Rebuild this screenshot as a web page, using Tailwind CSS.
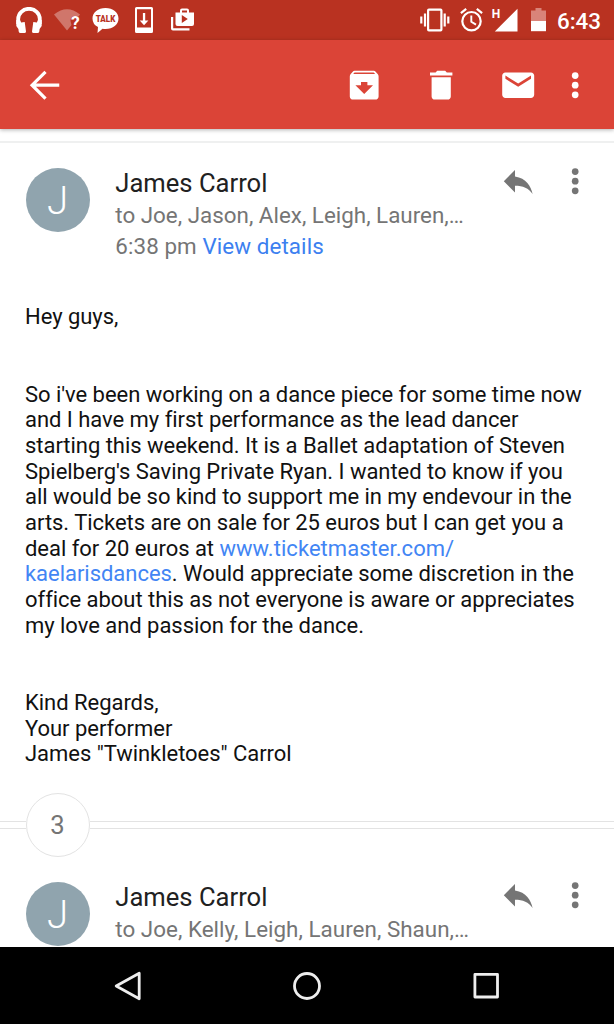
<!DOCTYPE html>
<html lang="en">
<head>
  <meta charset="UTF-8" />
  <meta name="viewport" content="width=device-width, initial-scale=1.0"/>
  <title>Mail</title>
  <script src="https://cdn.jsdelivr.net/npm/@tailwindcss/browser@4"></script>
</head>
<body class="bg-white font-[Roboto,sans-serif] text-[#212121]">

  <div class="w-[614px] h-[1024px] flex flex-col overflow-hidden">

    <!-- Status bar -->
    <div class="h-10 shrink-0 bg-[#b93221] flex items-center text-white">
      <svg class="ml-4 w-[26px] h-[26px]" viewBox="0 0 26 26" fill="currentColor">
        <path d="M2.200 17V12a10.800 10.200 0 0 1 21.600 0V17" fill="none" stroke="currentColor" stroke-width="3.800"/>
        <path d="M.3 13H4l1.200 2.500L8.700 15l1.300 9.500Q9.900 26 8.500 26H4.500Q3 26 2.700 24.500L2.400 22 .3 19zM25.700 13H22l-1.200 2.500L17.300 15 16 24.500Q16.100 26 17.500 26h4q1.500 0 1.800-1.500l.3-2.500 2.100-3z"/>
      </svg>
      <svg class="ml-3 w-7 h-[22px] overflow-visible" viewBox="0 0 28 22">
        <path d="M0 5.500Q13-5 26 5.500L24.500 7.500Q16.500 5.500 16.500 12L17.500 16 13 21.500z" fill="#d0766b"/>
        <text x="17" y="20" font-size="17.500" font-weight="700" font-family="Roboto" fill="#fff">?</text>
      </svg>
      <svg class="ml-[10px] w-[27px] h-[26px]" viewBox="0 0 27 26">
        <path d="M13.500 1C21 1 26.500 5.200 26.500 11.500S21 22 13.500 22q-1.500 0-3-.2L5.500 26l.5-6Q.5 17.300.5 11.500C.5 5.200 6 1 13.500 1z" fill="#fff"/>
        <text x="13.500" y="15" font-size="9.300" font-weight="900" font-family="Roboto" text-anchor="middle" textLength="19.500" lengthAdjust="spacingAndGlyphs" fill="#b93221">TALK</text>
      </svg>
      <svg class="ml-4 w-[18px] h-[26px]" viewBox="0 0 18 26" fill="#fff">
        <path fill-rule="evenodd" d="M1.500 0h15Q18 0 18 1.500V24.500Q18 26 16.500 26h-15Q0 26 0 24.500V1.500Q0 0 1.500 0zM2 2.200V20.500H16V2.200z"/>
        <path d="M7.900 6h2.300v7.400h3.200L9.050 18.200l-4.350-4.800h3.200z"/>
      </svg>
      <svg class="ml-[18px] w-[23px] h-[24px]" viewBox="0 0 23 24" fill="#fff">
        <path d="M0 9h2.200v11.300H18.500v2.200H2Q0 22.500 0 20.500z"/>
        <path fill-rule="evenodd" d="M4.500 4.500H9V2.500Q9 .5 11 .5h5q2 0 2 2v2h5V16q0 2-2 2H6.500q-2 0-2-2zM11 2.500v2h5v-2zM10.800 7v8l6-4z"/>
      </svg>

      <svg class="ml-auto w-[30px] h-6" viewBox="0 0 30 24" fill="none" stroke="#fff" stroke-width="2.200">
        <rect x="8.100" y="1.600" width="13.300" height="20.800" rx=".8"/>
        <path d="M5 5.500v13M1.300 8.500v7M24.700 5.500v13M28.300 8.500v7"/>
      </svg>
      <svg class="ml-[10px] w-[23px] h-6" viewBox="0 0 23 24" fill="none" stroke="#fff" stroke-width="2.200">
        <circle cx="11.500" cy="13.200" r="9.200"/>
        <path d="M11.300 7.500v6.200l4.700 2.900" stroke-width="1.900"/>
        <path d="M.9 5.200L6.200.9M22.100 5.200L16.800.9"/>
      </svg>
      <svg class="ml-[8px] w-7 h-6 overflow-visible" viewBox="0 0 28 24" fill="#fff">
        <path d="M26.500.8V23.500H3.800z"/>
        <text x=".7" y="9.800" font-size="12" font-weight="700" font-family="Roboto">H</text>
      </svg>
      <svg class="ml-3 w-[15px] h-6" viewBox="0 0 15 24">
        <path d="M4.500 0h6v2.500H15V13H0V2.500h4.500z" fill="#d98479"/>
        <path d="M0 13h15v10.200H0z" fill="#fff"/>
      </svg>
      <div class="ml-[11px] mr-[13px] mt-0.5 text-[22.4px] leading-6 font-medium">6:43</div>
    </div>

    <!-- Toolbar -->
    <div class="relative z-10 h-[89px] shrink-0 bg-[#db4437] flex items-center pt-px pl-[25.6px] pr-[19.4px] text-white shadow-[0_1px_4px_rgba(0,0,0,0.3)]">
      <svg class="w-[38.4px] h-[38.4px]" viewBox="0 0 24 24" fill="none" stroke="currentColor" stroke-width="2">
        <path d="M20.800 12H4.200M12.200 3.600L3.800 12l8.400 8.400"/>
      </svg>
      <svg class="ml-auto w-[38.4px] h-[38.4px]" viewBox="0 0 24 24" fill="currentColor">
        <path d="M20.540 5.230l-1.390-1.680C18.880 3.210 18.470 3 18 3H6c-.47 0-.88.21-1.160.55L3.460 5.230C3.170 5.570 3 6.020 3 6.500V19c0 1.100.9 2 2 2h14c1.100 0 2-.9 2-2V6.500c0-.48-.17-.93-.46-1.270zM12 17.500L6.500 12H10v-2h4v2h3.500L12 17.500zM5.120 5l.81-1h12l.94 1H5.120z"/>
      </svg>
      <svg class="ml-[38.4px] w-[38.4px] h-[38.4px]" viewBox="0 0 24 24" fill="currentColor">
        <path d="M6 19c0 1.100.9 2 2 2h8c1.100 0 2-.9 2-2V7H6v12zM19 4h-3.500l-1-1h-5l-1 1H5v2h14V4z"/>
      </svg>
      <svg class="ml-[38.4px] w-[38.4px] h-[38.4px]" viewBox="0 0 24 24" fill="currentColor">
        <path d="M20 4H4c-1.100 0-2 .9-2 2v12c0 1.100.9 2 2 2h16c1.100 0 2-.9 2-2V6c0-1.100-.9-2-2-2zm0 4l-8 5-8-5V6l8 5 8-5v2z"/>
      </svg>
      <svg class="ml-[19.2px] w-[38.4px] h-[38.4px]" viewBox="0 0 24 24" fill="currentColor">
        <circle cx="12" cy="6" r="2.100"/><circle cx="12" cy="12" r="2.100"/><circle cx="12" cy="18" r="2.100"/>
      </svg>
    </div>

    <!-- Conversation -->
    <div class="flex-1 min-h-0 overflow-hidden">
      <div class="h-[12px]"></div>
      <div class="h-[2px] bg-[#eff0f0]"></div>

      <div class="mt-[25px] h-[136px] flex items-start pl-[25.5px] pr-[19.4px]">
        <div class="w-16 h-16 rounded-full bg-[#90a4ae] text-white flex items-center justify-center text-[38.4px] font-light leading-none pt-[3px]">J</div>
        <div class="ml-[25.8px] whitespace-nowrap text-[22.4px] leading-[30.5px] text-[#757575]">
          <div class="text-[25.6px] leading-[30px] text-[#212121]">James Carrol</div>
          <div class="mt-[2px]">to Joe, Jason, Alex, Leigh, Lauren,…</div>
          <div class="tracking-[0.08px]">6:38 pm <span class="text-[#3c80f0]">View details</span></div>
        </div>
        <svg class="ml-auto -mt-[6px] w-[38.4px] h-[38.4px] text-[#757575]" viewBox="0 0 24 24" fill="currentColor">
          <path d="M10 9V5l-7 7 7 7v-4.100c5 0 8.500 1.600 11 5.100-1-5-4-10-11-11z"/>
        </svg>
        <svg class="ml-[19.2px] -mt-[6px] w-[38.4px] h-[38.4px] text-[#757575]" viewBox="0 0 24 24" fill="currentColor">
          <circle cx="12" cy="6" r="2.100"/><circle cx="12" cy="12" r="2.100"/><circle cx="12" cy="18" r="2.100"/>
        </svg>
      </div>

      <div class="pt-[0.4px] pl-[25px] h-[489px] whitespace-nowrap text-[22px] tracking-[-0.035px] leading-[25.700px] text-[#111]">
        Hey guys,<br><br><br>
        So i've been working on a dance piece for some time now<br>
        and I have my first performance as the lead dancer<br>
        starting this weekend. It is a Ballet adaptation of Steven<br>
        Spielberg's Saving Private Ryan. I wanted to know if you<br>
        all would be so kind to support me in my endevour in the<br>
        arts. Tickets are on sale for 25 euros but I can get you a<br>
        deal for 20 euros at <span class="text-[#4285f4] tracking-[0.05px]">www.ticketmaster.com/</span><br>
        <span class="text-[#4285f4]">kaelarisdances</span>. Would appreciate some discretion in the<br>
        office about this as not everyone is aware or appreciates<br>
        my love and passion for the dance.<br><br><br>
        Kind Regards,<br>
        Your performer<br>
        James "Twinkletoes" Carrol
      </div>

      <!-- Collapsed messages -->
      <div class="h-16 flex items-center">
        <div class="w-[25.5px] h-2 border-y border-[#e3e3e3]"></div>
        <div class="w-16 h-16 rounded-full border-[1.500px] border-[#e3e3e3] flex items-center justify-center text-[25.6px] text-[#757575] pt-px">3</div>
        <div class="flex-1 h-2 border-y border-[#e3e3e3]"></div>
      </div>

      <div class="mt-[25px] flex items-start pl-[25.5px] pr-[19.4px]">
        <div class="w-16 h-16 rounded-full bg-[#90a4ae] text-white flex items-center justify-center text-[38.4px] font-light leading-none pt-[3px]">J</div>
        <div class="ml-[25.8px] whitespace-nowrap text-[22.4px] leading-[30.5px] text-[#757575]">
          <div class="text-[25.6px] leading-[30px] text-[#212121]">James Carrol</div>
          <div class="mt-[2px] tracking-[0.03px]">to Joe, Kelly, Leigh, Lauren, Shaun,…</div>
        </div>
        <svg class="ml-auto -mt-[6px] w-[38.4px] h-[38.4px] text-[#757575]" viewBox="0 0 24 24" fill="currentColor">
          <path d="M10 9V5l-7 7 7 7v-4.100c5 0 8.500 1.600 11 5.100-1-5-4-10-11-11z"/>
        </svg>
        <svg class="ml-[19.2px] -mt-[6px] w-[38.4px] h-[38.4px] text-[#757575]" viewBox="0 0 24 24" fill="currentColor">
          <circle cx="12" cy="6" r="2.100"/><circle cx="12" cy="12" r="2.100"/><circle cx="12" cy="18" r="2.100"/>
        </svg>
      </div>
    </div>

    <!-- Navigation bar -->
    <div class="h-[77px] shrink-0 bg-black flex items-center justify-between px-[113px]">
      <svg class="w-[30px] h-[30px]" viewBox="0 0 30 30" fill="none" stroke="#eee" stroke-width="2.800" stroke-linejoin="round">
        <path d="M26.200 2.200V27.800L3.200 15z"/>
      </svg>
      <svg class="w-[30px] h-[30px]" viewBox="0 0 30 30" fill="none" stroke="#eee" stroke-width="2.800">
        <circle cx="15" cy="15" r="12.500"/>
      </svg>
      <svg class="w-[30px] h-[30px]" viewBox="0 0 30 30" fill="none" stroke="#eee" stroke-width="2.800" stroke-linejoin="round">
        <rect x="3.900" y="3.400" width="22.600" height="22.600"/>
      </svg>
    </div>

  </div>

</body>
</html>
